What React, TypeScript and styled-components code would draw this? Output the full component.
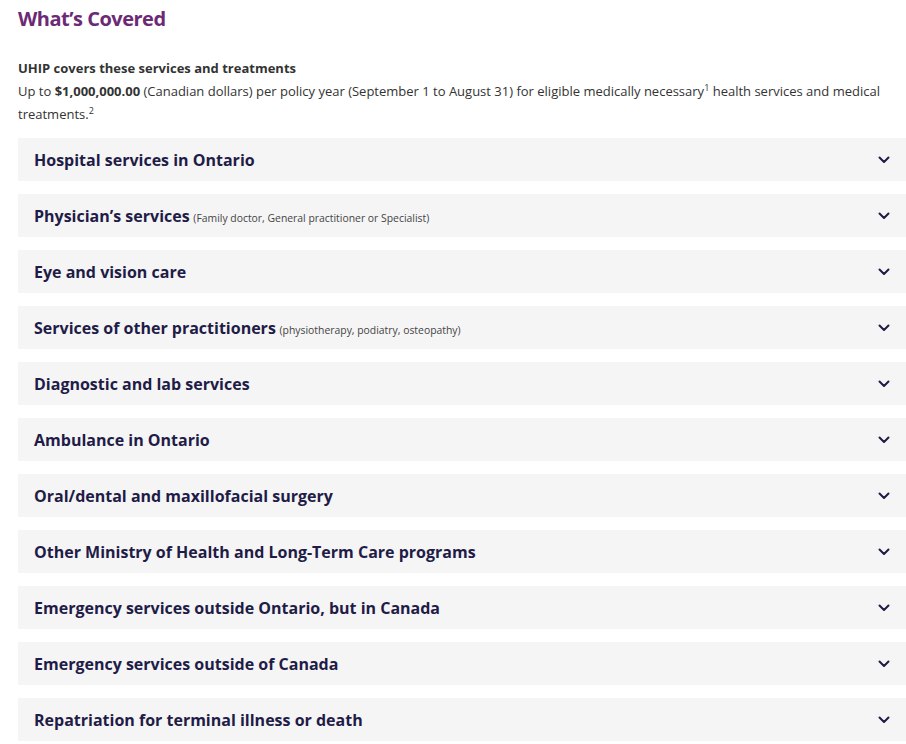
import React from "react";
import styled, { createGlobalStyle } from "styled-components";

const Global = createGlobalStyle`
  html, body { margin: 0; padding: 0; background: #fff; }
  body { font-family: "Open Sans", "Noto Sans", sans-serif; }
`;

const Page = styled.div`
  padding: 6px 0 0 18px;
  width: 906px;
  box-sizing: border-box;
`;

const Title = styled.h2`
  margin: 0;
  font-size: 20px;
  line-height: 26px;
  font-weight: 700;
  color: #6c2a75;
  letter-spacing: -0.5px;
`;

const Intro = styled.div`
  margin-top: 25px;
  font-size: 13px;
  line-height: 23px;
  color: #333;
  padding-right: 10px;
`;

const Lead = styled.div`
  font-weight: 700;
`;

const Sup = styled.sup`
  font-size: 9px;
  line-height: 0;
  vertical-align: 5px;
`;

const List = styled.div`
  margin-top: 12px;
  display: flex;
  flex-direction: column;
  gap: 13px;
`;

const Row = styled.div`
  height: 43px;
  background: #f5f5f5;
  display: flex;
  align-items: center;
  justify-content: space-between;
  padding: 0 16px 0 16px;
  box-sizing: border-box;
`;

const Label = styled.div`
  font-size: 16px;
  font-weight: 700;
  color: #1f1c47;
  white-space: nowrap;
`;

const Note = styled.span`
  font-size: 10.4px;
  font-weight: 400;
  color: #444;
  margin-left: 1px;
`;

const Chevron = () => (
  <svg width="12" height="8" viewBox="0 0 12 8" fill="none">
    <path d="M1.5 1.5 L6 6 L10.5 1.5" stroke="#1f1c47" strokeWidth="2" strokeLinecap="round" strokeLinejoin="round" />
  </svg>
);

const items: { label: string; note?: string }[] = [
  { label: "Hospital services in Ontario" },
  { label: "Physician\u2019s services", note: "(Family doctor, General practitioner or Specialist)" },
  { label: "Eye and vision care" },
  { label: "Services of other practitioners", note: "(physiotherapy, podiatry, osteopathy)" },
  { label: "Diagnostic and lab services" },
  { label: "Ambulance in Ontario" },
  { label: "Oral/dental and maxillofacial surgery" },
  { label: "Other Ministry of Health and Long-Term Care programs" },
  { label: "Emergency services outside Ontario, but in Canada" },
  { label: "Emergency services outside of Canada" },
  { label: "Repatriation for terminal illness or death" },
];

export default function App() {
  return (
    <>
      <Global />
      <Page>
        <Title>What’s Covered</Title>
        <Intro>
          <Lead>UHIP covers these services and treatments</Lead>
          Up to <b>$1,000,000.00</b> (Canadian dollars) per policy year (September 1 to August 31) for eligible
          medically necessary<Sup>1</Sup> health services and medical treatments.<Sup>2</Sup>
        </Intro>
        <List>
          {items.map((it) => (
            <Row key={it.label}>
              <Label>
                {it.label}
                {it.note && <Note> {it.note}</Note>}
              </Label>
              <Chevron />
            </Row>
          ))}
        </List>
      </Page>
    </>
  );
}
